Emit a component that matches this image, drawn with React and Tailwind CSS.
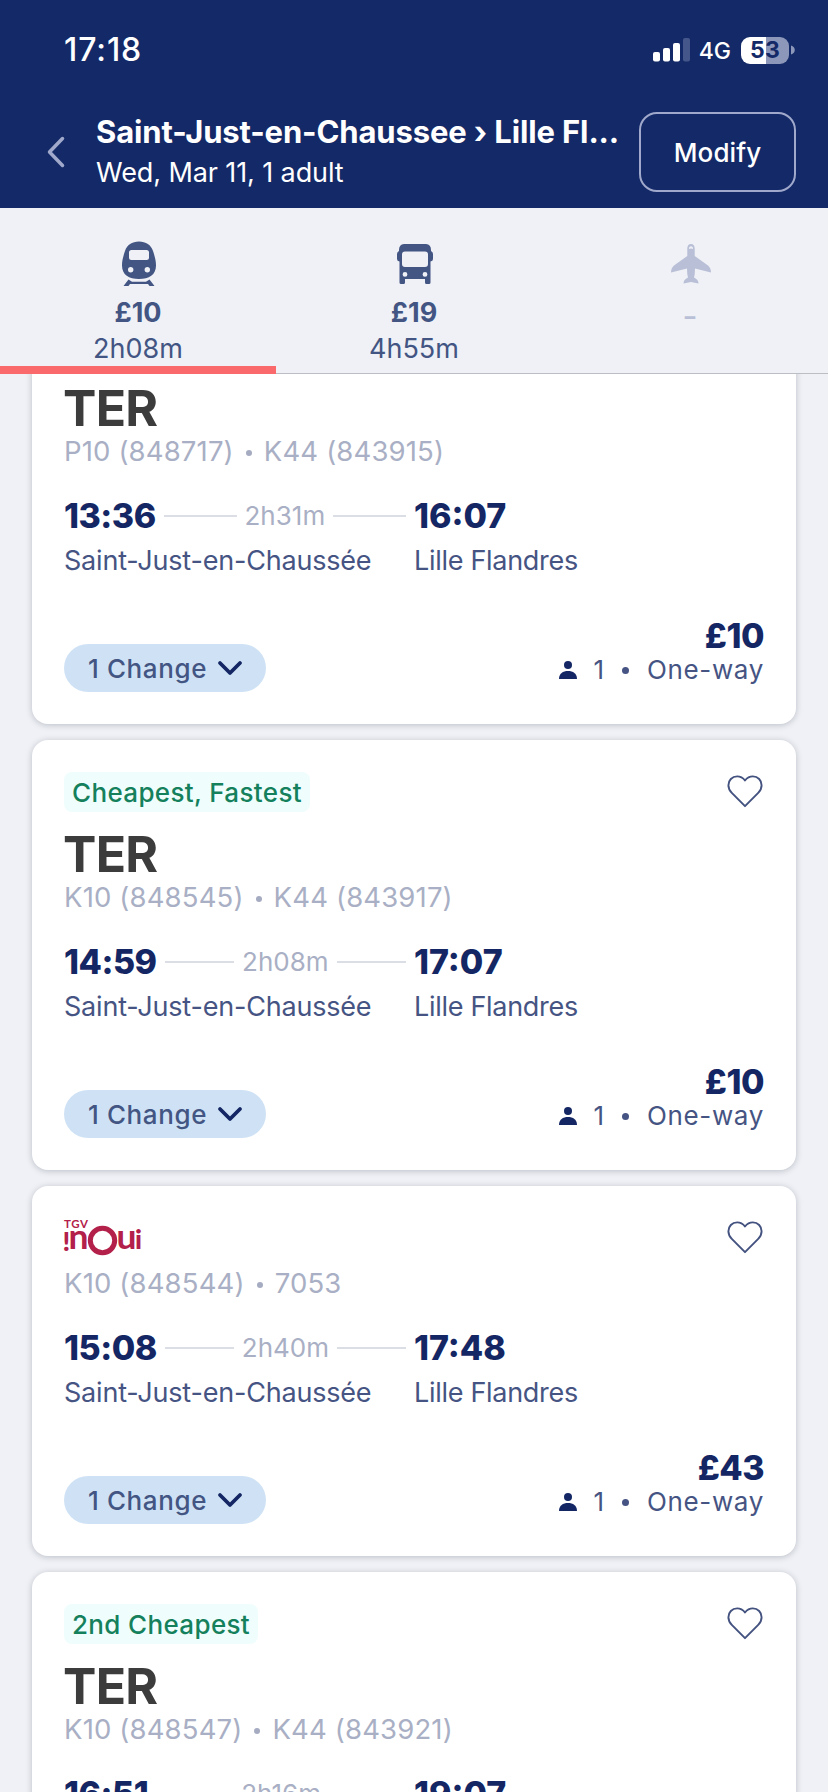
import React from "react";

const trips = [
  { brand: "TER", ids: ["P10 (848717)", "K44 (843915)"], from: "13:36", to: "16:07", duration: "2h31m", price: "£10", compact: true },
  { brand: "TER", ids: ["K10 (848545)", "K44 (843917)"], from: "14:59", to: "17:07", duration: "2h08m", price: "£10", badge: "Cheapest, Fastest" },
  { brand: "INOUI", ids: ["K10 (848544)", "7053"], from: "15:08", to: "17:48", duration: "2h40m", price: "£43" },
  { brand: "TER", ids: ["K10 (848547)", "K44 (843921)"], from: "16:51", to: "19:07", duration: "2h16m", price: "£10", badge: "2nd Cheapest" },
];

function Signal() {
  return (
    <svg width="38" height="24" viewBox="0 0 38 24" fill="white">
      <rect x="0" y="14" width="7" height="9.5" rx="2" />
      <rect x="10" y="10" width="7" height="13.5" rx="2" />
      <rect x="20" y="5" width="7" height="18.5" rx="2" />
      <rect x="30" y="0" width="7" height="23.5" rx="2" fill="#45578a" />
    </svg>
  );
}

function Battery() {
  return (
    <div className="flex items-center gap-0.5">
      <div className="flex h-[27px] w-12 items-center justify-center rounded-[9px] bg-[linear-gradient(90deg,#fff_52%,#8c97b9_52%)] text-[23px] font-bold leading-none tracking-[0.2px] text-[#142967]">
        53
      </div>
      <svg width="4" height="10" viewBox="0 0 4 10">
        <path d="M0 0.5C5 2 5 8 0 9.5Z" fill="#8c97b9" />
      </svg>
    </div>
  );
}

function TrainIcon() {
  return (
    <svg width="36" height="46" viewBox="0 0 36 46" fill="#435583">
      <path
        fillRule="evenodd"
        d="M18 0.500C25 0.500 30 4 32 10C34 16 35 20 35 24.500C35 34 28 38 18 38C8 38 1 34 1 24.500C1 20 2 16 4 10C6 4 11 0.500 18 0.500ZM10.500 9Q8 9 8 11.500V16.500Q8 19 10.500 19H25.500Q28 19 28 16.500V11.500Q28 9 25.500 9ZM9.700 26A2.700 2.700 0 1 0 9.700 31.400A2.700 2.700 0 1 0 9.700 26ZM26.300 26A2.700 2.700 0 1 0 26.300 31.400A2.700 2.700 0 1 0 26.300 26Z"
      />
      <path d="M7.500 38.500L11 40.800H25L28.500 38.500L33.500 45H28.500L27 43H9L7.500 45H2.500Z" />
    </svg>
  );
}

function BusIcon() {
  return (
    <svg width="36" height="40" viewBox="0 0 36 40" fill="#435583">
      <path
        fillRule="evenodd"
        d="M7 0H29Q34 0.500 34 6V7Q36 8 36 10V15Q36 17 33.500 17.500V38.500Q33.500 40 32 40H29.500Q28 40 28 38.500V35H8V38.500Q8 40 6.500 40H4Q2.500 40 2.500 38.500V17.500Q0 17 0 15V10Q0 8 2 7V6Q2 0.500 7 0ZM8 7.500Q5 7.500 5 10.500V20Q5 23 8 23H28Q31 23 31 20V10.500Q31 7.500 28 7.500ZM8 28A2.400 2.400 0 1 0 8 32.800A2.400 2.400 0 1 0 8 28ZM28 28A2.400 2.400 0 1 0 28 32.800A2.400 2.400 0 1 0 28 28Z"
      />
    </svg>
  );
}

function PlaneIcon() {
  return (
    <svg width="40" height="40" viewBox="0 0 40 40" fill="#b9bfd6">
      <path
        fillRule="evenodd"
        d="M20 0C22.500 0 23.700 2 23.700 4.500V12L37 21.500Q40 24 40 28.500L24 24.500Q24 30 23 33.500Q27.500 35.500 27.500 39.500L20 38L12.500 39.500Q12.500 35.500 17 33.500Q16 30 16 24.500L0 28.500Q0 24 3 21.500L16.300 12V4.500C16.300 2 17.500 0 20 0ZM17.900 5Q20 3.800 22.100 5Q22 2.200 20 2.200Q18 2.200 17.900 5Z"
      />
    </svg>
  );
}

function Heart() {
  return (
    <svg width="36" height="33" viewBox="0 0 36 33" fill="none" stroke="#43527f" strokeWidth="1.9" strokeLinejoin="round">
      <path d="M18 5.500C15.500 2.300 13 1.400 10.200 1.400C5 1.400 1.400 5.400 1.400 10.200C1.400 13.200 2.600 15.600 4.800 17.900L18 31.200L31.200 17.900C33.400 15.600 34.600 13.200 34.600 10.200C34.600 5.400 31 1.400 25.800 1.400C23 1.400 20.500 2.300 18 5.500Z" />
    </svg>
  );
}

function InouiLogo() {
  return (
    <svg width="80" height="40" viewBox="0 0 80 40" fill="#b3204a" className="overflow-visible font-[Lato,sans-serif]">
      <text x="0" y="10" fontSize="11.500" fontWeight="700" textLength="24">TGV</text>
      <text x="-1.500" y="32.500" fontSize="27" fontWeight="900">!</text>
      <text x="4.500" y="31" fontSize="34" fontWeight="700" textLength="20" lengthAdjust="spacingAndGlyphs">n</text>
      <circle cx="38.500" cy="22.500" r="12.200" fill="none" stroke="#b3204a" strokeWidth="5" />
      <text x="52.500" y="31" fontSize="34" fontWeight="700" textLength="20" lengthAdjust="spacingAndGlyphs">u</text>
      <text x="71" y="31" fontSize="27" fontWeight="900">i</text>
    </svg>
  );
}

function Tab({ icon, price, duration }) {
  return (
    <div className="flex w-[276px] flex-col items-center pt-[33px] text-[#435583]">
      <div className="flex h-[46px] items-center pl-px">{icon}</div>
      <div className="mt-[9px] h-[33px] text-[27px] font-bold leading-[33px]">{price}</div>
      <div className="mt-[5px] text-[27px] leading-[30px]">{duration}</div>
    </div>
  );
}

function Trip({ trip }) {
  return (
    <article className="flex flex-none flex-col rounded-2xl bg-white p-8 shadow-[0_1px_6px_rgba(40,45,60,0.26)]">
      <div className="flex justify-between">
        <div className="flex flex-col items-start">
          {trip.badge && (
            <div className="mb-5 flex h-10 items-center rounded-lg bg-[#effefc] px-2 text-[26px] font-medium tracking-[0.35px] text-[#15805c]">
              {trip.badge}
            </div>
          )}
          <div className="flex h-10 items-center">
            {trip.brand === "TER" ? (
              <span className="-ml-px pt-1 text-[50px] font-bold leading-none tracking-[-0.7px] text-[#3c3c3c]">TER</span>
            ) : (
              <InouiLogo />
            )}
          </div>
        </div>
        {!trip.compact && (
          <div className="pr-px pt-[3px]">
            <Heart />
          </div>
        )}
      </div>
      <div className="mt-[9px] flex h-8 items-center text-[27.500px] leading-8 tracking-[0.15px] text-[#a9afc4]">
        <span>{trip.ids[0]}</span>
        <svg width="6" height="6" viewBox="0 0 6 6" className="mx-[12px] mt-1">
          <circle cx="3" cy="3" r="3" fill="#a5abc1" />
        </svg>
        <span>{trip.ids[1]}</span>
      </div>
      <div className="mt-[33px] flex h-8 items-center">
        <div className="flex w-[350px] items-center gap-2 pr-2">
          <span className="text-[34px] font-extrabold leading-8 tracking-[-0.5px] text-[#142764]">{trip.from}</span>
          <span className="h-0.5 flex-1 bg-[#dcdee6]" />
          <span className="text-[26px] leading-8 text-[#a9afc4]">{trip.duration}</span>
          <span className="h-0.5 flex-1 bg-[#dcdee6]" />
        </div>
        <span className="text-[34px] font-extrabold leading-8 text-[#142764]">{trip.to}</span>
      </div>
      <div className="mt-[13px] flex h-8 text-[27px] leading-8 tracking-[-0.2px] text-[#465483]">
        <span className="w-[350px]">Saint-Just-en-Chaussée</span>
        <span className="tracking-[-0.3px]">Lille Flandres</span>
      </div>
      <div className="mt-[41px] flex items-end justify-between">
        <div className="flex h-12 w-[202px] items-center justify-between rounded-full bg-[#cfe2f5] px-6">
          <span className="whitespace-nowrap text-[26px] font-medium tracking-[0.6px] text-[#435583]">1 Change</span>
          <svg width="26" height="16" viewBox="0 0 26 16" fill="none" stroke="#142764" strokeWidth="3.800" strokeLinecap="round" strokeLinejoin="round" className="-mr-px">
            <path d="M3 3L13 13L23 3" />
          </svg>
        </div>
        <div className="flex flex-col items-end pb-1.5">
          <div className="h-9 text-[34px] font-extrabold leading-9 tracking-[-0.5px] text-[#142764]">{trip.price}</div>
          <div className="flex h-8 items-center text-[26px] leading-8 text-[#465483]">
            <svg width="18" height="18" viewBox="0 0 18 18" fill="#142764" className="mr-4">
              <circle cx="9" cy="4" r="4" />
              <path d="M0 18C0 12.500 4 10 9 10S18 12.500 18 18Z" />
            </svg>
            <span className="mr-[18px]">1</span>
            <svg width="7" height="7" viewBox="0 0 6 6" className="mr-[18px]">
              <circle cx="3" cy="3" r="3" fill="#465483" />
            </svg>
            <span className="tracking-[0.65px]">One-way</span>
          </div>
        </div>
      </div>
    </article>
  );
}

export default function App() {
  return (
    <div className="flex h-[1792px] w-[828px] flex-col overflow-hidden bg-[#eff1f6] font-[Inter,sans-serif]">
      <header className="h-52 flex-none bg-[#142967] text-white">
        <div className="flex h-[100px] items-center pl-16 pr-[33px]">
          <div className="flex-1 text-[32px] font-medium leading-none tracking-[0.9px]">17:18</div>
          <Signal />
          <span className="ml-2 mr-2.5 pt-0.5 text-[23px] font-medium leading-none">4G</span>
          <Battery />
        </div>
        <div className="flex items-center pl-[46px] pr-8 pt-3">
          <svg width="20" height="34" viewBox="0 0 20 34" fill="none" stroke="#a0a9cb" strokeWidth="3.500" strokeLinecap="round" strokeLinejoin="round">
            <path d="M16.500 3.500L3.500 17L16.500 30.500" />
          </svg>
          <div className="ml-[30px] w-[543px]">
            <div className="whitespace-nowrap text-[31px] font-bold leading-10 tracking-[-0.13px]">Saint-Just-en-Chaussee › Lille Fl...</div>
            <div className="pt-px text-[27px] leading-[39px] tracking-[-0.1px]">Wed, Mar 11, 1 adult</div>
          </div>
          <button className="h-20 w-[157px] flex-none rounded-[18px] border-2 border-[#a0a9cb] pt-px text-[26px] font-medium tracking-[0.1px]">Modify</button>
        </div>
      </header>
      <nav className="relative flex h-[166px] flex-none border-b border-[#bcbec6]">
        <Tab icon={<TrainIcon />} price="£10" duration="2h08m" />
        <Tab icon={<BusIcon />} price="£19" duration="4h55m" />
        <Tab icon={<PlaneIcon />} price={<span className="block pt-1 text-[21px] font-extrabold text-[#b9bfd6]">–</span>} />
        <div className="absolute -bottom-px left-0 h-2 w-[276px] bg-[#fa696c]" />
      </nav>
      <main className="flex min-h-0 flex-1 flex-col overflow-hidden px-8">
        <div className="-mx-8 -mt-5 flex flex-col gap-4 px-8">
          {trips.map((trip) => (
            <Trip key={trip.from} trip={trip} />
          ))}
        </div>
      </main>
    </div>
  );
}
